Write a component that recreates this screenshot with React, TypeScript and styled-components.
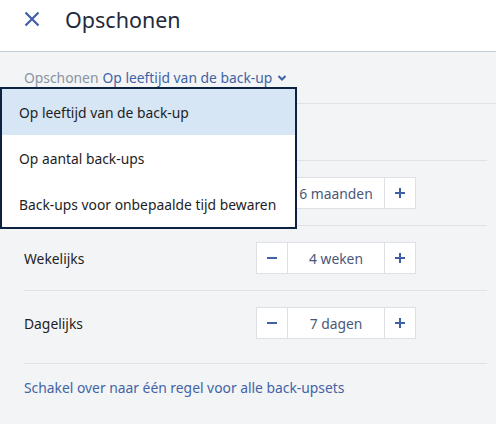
import styled, { createGlobalStyle } from "styled-components";

const GlobalStyle = createGlobalStyle`
  html, body {
    margin: 0;
    padding: 0;
    background: #f3f4f6;
    font-family: "Noto Sans", "Open Sans", sans-serif;
  }
  * { box-sizing: border-box; }
`;

const periods = [
  { id: "maand", label: "Maandelijks", value: "6 maanden" },
  { id: "week", label: "Wekelijks", value: "4 weken" },
  { id: "dag", label: "Dagelijks", value: "7 dagen" },
];

const options = [
  "Op leeftijd van de back-up",
  "Op aantal back-ups",
  "Back-ups voor onbepaalde tijd bewaren",
];

const App = () => {
  return (
    <>
      <GlobalStyle />
      <Page>
        <Header>
          <CloseButton aria-label="Sluiten">
            <svg width="16" height="16" viewBox="0 0 16 16">
              <path d="M1.5 1.5 L14.5 14.5 M14.5 1.5 L1.5 14.5" stroke="#3f5fa6" strokeWidth="2.2" fill="none" />
            </svg>
          </CloseButton>
          <Title>Opschonen</Title>
        </Header>

        <Picker>
          <Trigger>
            <span className="muted">Opschonen</span>
            <span className="value">Op leeftijd van de back-up</span>
            <svg width="10" height="8" viewBox="0 0 10 8">
              <path d="M1.5 2 L5 5.5 L8.5 2" stroke="#3f5fa6" strokeWidth="2" fill="none" />
            </svg>
          </Trigger>
          <Menu>
            {options.map((o, i) => (
              <MenuItem key={o} $selected={i === 0}>
                {o}
              </MenuItem>
            ))}
          </Menu>
        </Picker>

        <Content>
          {/* section under the open menu, hidden in this state */}
          <Intro />
          {periods.map((p, i) => (
            <Row key={p.id} $last={i === periods.length - 1}>
              <Label>{p.label}</Label>
              <Stepper>
                <StepButton>
                  <svg width="10" height="10" viewBox="0 0 10 10">
                    <path d="M0 5 H10" stroke="#3f5fa6" strokeWidth="2" />
                  </svg>
                </StepButton>
                <StepValue>{p.value}</StepValue>
                <StepButton>
                  <svg width="10" height="10" viewBox="0 0 10 10">
                    <path d="M0 5 H10 M5 0 V10" stroke="#3f5fa6" strokeWidth="2" />
                  </svg>
                </StepButton>
              </Stepper>
            </Row>
          ))}
          <Link>Schakel over naar één regel voor alle back-upsets</Link>
        </Content>
      </Page>
    </>
  );
};

const Page = styled.div`
  width: 496px;
  height: 424px;
  background: #f3f4f6;
  overflow: hidden;
  font-size: 13.85px;
`;

const Header = styled.div`
  display: flex;
  align-items: flex-start;
  height: 52px;
  padding: 0 0 0 24px;
  background: #fff;
  border-bottom: 1px solid #c3cbd8;
`;

const CloseButton = styled.div`
  display: flex;
  width: 16px;
  height: 16px;
  margin: 11px 25px 0 0;
`;

const Title = styled.h1`
  margin: 6px 0 0 0;
  font-size: 21.5px;
  line-height: 28px;
  font-weight: 400;
  color: #1f2b3d;
`;

const Picker = styled.div`
  position: relative;
  height: 52px;
  padding: 0 24px;
  display: flex;
  align-items: center;
  border-bottom: 1px solid #dfe2e6;
`;

const Trigger = styled.div`
  display: flex;
  align-items: center;
  gap: 4px;

  .muted {
    color: #8a92a0;
  }

  .value {
    color: #4263a5;
  }

  svg {
    margin-left: 1px;
  }
`;

const Menu = styled.div`
  position: absolute;
  left: 0;
  top: 35px;
  width: 297px;
  background: #fff;
  border: 2px solid #0d2241;
  z-index: 2;
`;

const MenuItem = styled.div<{ $selected?: boolean }>`
  height: 46px;
  display: flex;
  align-items: center;
  padding: 0 14px 0 17px;
  white-space: nowrap;
  color: #1d1d24;
  background: ${({ $selected }) => ($selected ? "#d6e6f4" : "#fff")};
`;

const Content = styled.div`
  padding: 0 9px 0 24px;
`;

const Intro = styled.div`
  height: 57px;
  border-bottom: 1px solid #dfe2e6;
`;

const Row = styled.div<{ $last?: boolean }>`
  display: flex;
  align-items: center;
  justify-content: space-between;
  padding: 16px 71px ${({ $last }) => ($last ? "24px" : "16px")} 0;
  border-bottom: 1px solid #dfe2e6;
`;

const Label = styled.div`
  color: #1d1d24;
`;

const Stepper = styled.div`
  display: flex;
  height: 32px;
  background: #fff;
  border: 1px solid #dde1e6;
`;

const StepButton = styled.div`
  width: 30px;
  display: flex;
  align-items: center;
  justify-content: center;
`;

const StepValue = styled.div`
  width: 98px;
  display: flex;
  align-items: center;
  justify-content: center;
  color: #4a5878;
  border-left: 1px solid #dde1e6;
  border-right: 1px solid #dde1e6;
`;

const Link = styled.div`
  padding-top: 14px;
  color: #4263a5;
`;

export default App;
